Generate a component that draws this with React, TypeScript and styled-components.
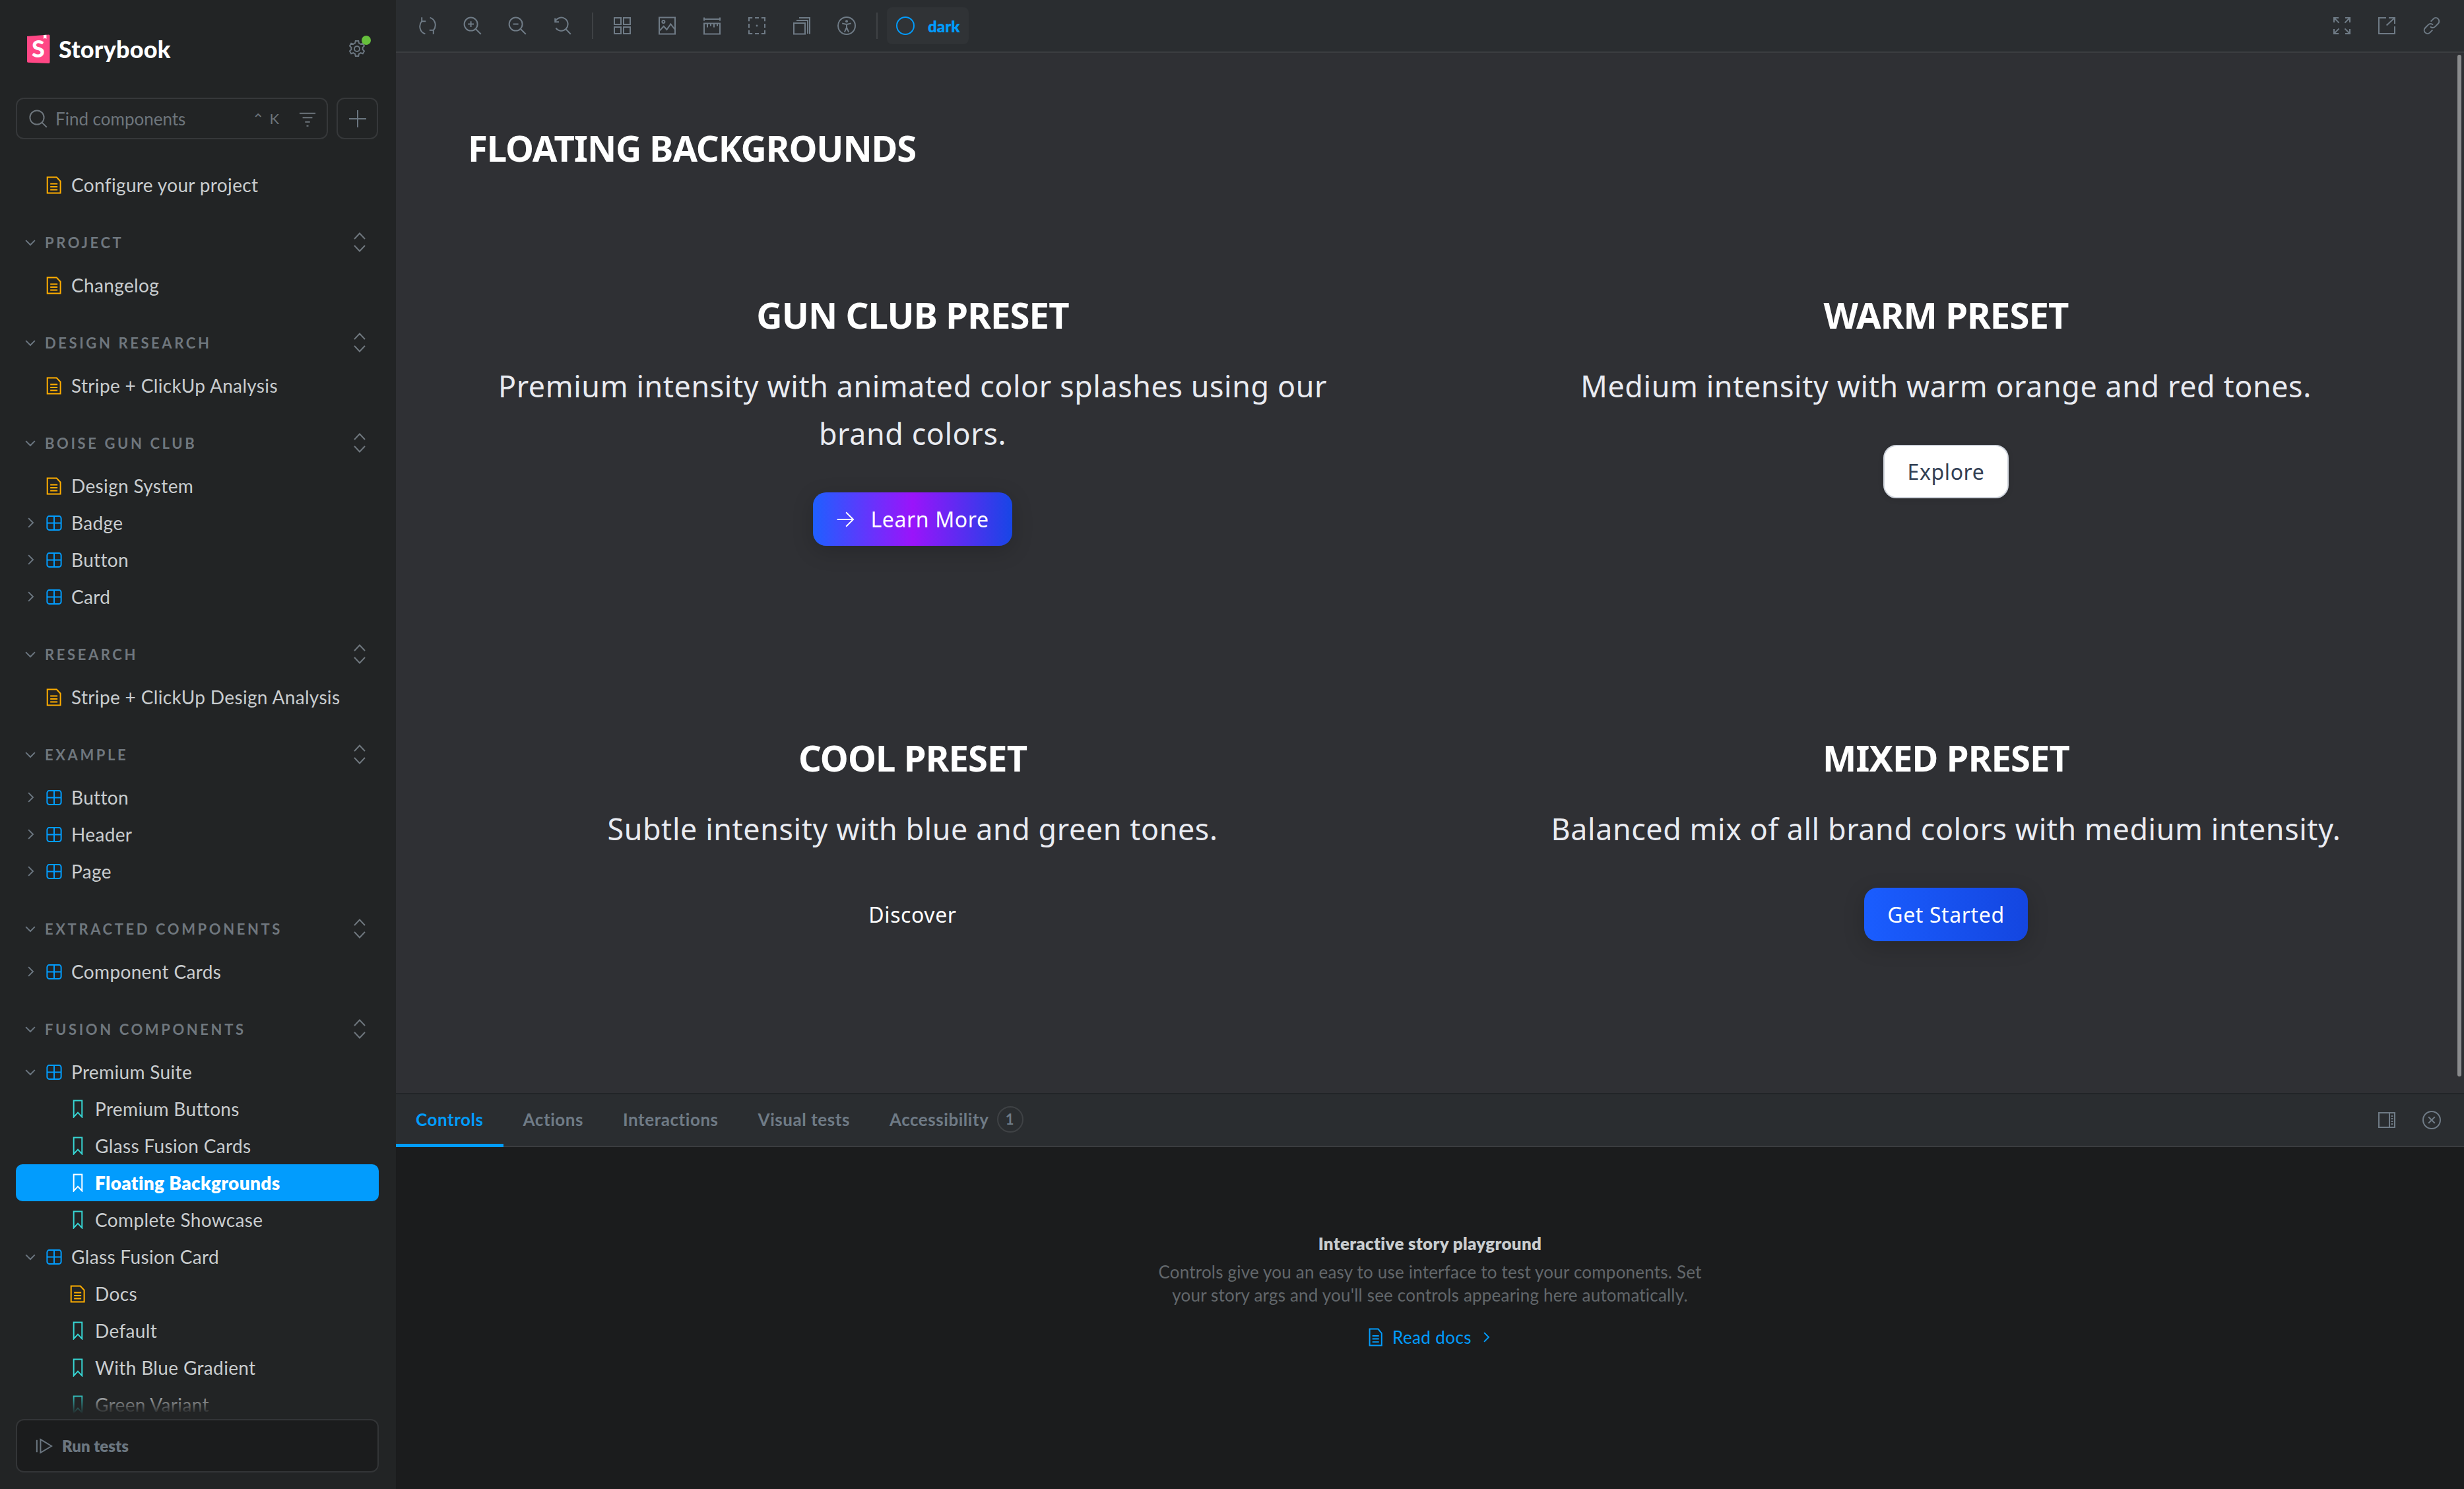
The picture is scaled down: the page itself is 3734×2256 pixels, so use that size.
import styled, { createGlobalStyle } from "styled-components";
import type { ReactNode } from "react";

const GlobalStyle = createGlobalStyle`
  html, body {
    margin: 0;
    padding: 0;
    background: #222425;
    overflow: hidden;
  }
  * {
    box-sizing: border-box;
  }
`;

const UI_FONT = `"Lato", "Noto Sans", sans-serif`;
const PREVIEW_FONT = `"Noto Sans", "Open Sans", sans-serif`;

const Shell = styled.div`
  display: flex;
  width: 3734px;
  height: 2256px;
  font-family: ${UI_FONT};
  overflow: hidden;
`;

const Sidebar = styled.aside`
  display: flex;
  flex-direction: column;
  flex: 0 0 600px;
  height: 100%;
  background: #222425;
`;

const Brand = styled.div`
  display: flex;
  align-items: center;
  justify-content: space-between;
  height: 52px;
  margin: 48px 45px 0 40px;
`;

const BrandName = styled.div`
  display: flex;
  align-items: center;
  gap: 13px;
  color: #ffffff;
  font-size: 36px;
  font-weight: 900;
  letter-spacing: 0.2px;
`;

const Gear = styled.div`
  position: relative;
  display: flex;
  color: #6b7680;
`;

const GreenDot = styled.span`
  position: absolute;
  top: -6px;
  right: -7px;
  width: 14px;
  height: 14px;
  border-radius: 50%;
  background: #66bf3c;
`;

const SearchRow = styled.div`
  display: flex;
  gap: 13px;
  margin: 48px 27px 0 24px;
`;

const SearchBox = styled.div`
  display: flex;
  align-items: center;
  flex: 1;
  height: 63px;
  padding: 0 16px 0 18px;
  border: 2px solid #36383a;
  border-radius: 12px;
  color: #6d757c;
  font-size: 26px;
`;

const SearchText = styled.span`
  flex: 1;
  margin-left: 12px;
  white-space: nowrap;
`;

const Shortcut = styled.span`
  margin-right: 22px;
  font-size: 22px;
  letter-spacing: 8px;
`;

const AddButton = styled.div`
  display: flex;
  align-items: center;
  justify-content: center;
  flex: 0 0 63px;
  height: 63px;
  border: 2px solid #36383a;
  border-radius: 12px;
  color: #6b7680;
`;

const TreeArea = styled.div`
  flex: 1;
  min-height: 0;
  margin-top: 41px;
  padding: 0 26px 0 24px;
  overflow: hidden;
`;

const Group = styled.div`
  margin-bottom: 22px;
`;

const GroupHeader = styled.div`
  display: flex;
  align-items: center;
  height: 74px;
  padding: 0 19px 0 14px;
  color: #6f777e;
`;

const CaretSlot = styled.span`
  display: flex;
  align-items: center;
  flex: 0 0 30px;
  color: #6b7680;
`;

const GroupLabel = styled.span`
  flex: 1;
  font-size: 22px;
  font-weight: 700;
  letter-spacing: 3.6px;
  text-transform: uppercase;
  white-space: nowrap;
`;

const Row = styled.div<{ $depth: number; $selected?: boolean }>`
  display: flex;
  align-items: center;
  height: 56px;
  padding-left: ${(p) => (p.$depth === 2 ? 80 : 14)}px;
  border-radius: 10px;
  background: ${(p) => (p.$selected ? "#029cfd" : "transparent")};
  color: ${(p) => (p.$selected ? "#ffffff" : "#c9cdcf")};
  font-size: 28px;
  font-weight: ${(p) => (p.$selected ? 800 : 400)};
  letter-spacing: 0.35px;
  white-space: nowrap;
`;

const RowIcon = styled.span<{ $color: string }>`
  display: flex;
  justify-content: center;
  flex: 0 0 28px;
  margin-right: 12px;
  color: ${(p) => p.$color};
`;

const SidebarFooter = styled.div`
  position: relative;
  flex: 0 0 auto;
  padding: 8px 26px 25px 24px;

  &::before {
    content: "";
    position: absolute;
    left: 0;
    right: 0;
    top: -32px;
    height: 32px;
    background: linear-gradient(to bottom, rgba(34, 36, 37, 0), #222425);
  }
`;

const RunTests = styled.div`
  display: flex;
  align-items: center;
  gap: 14px;
  height: 81px;
  padding-left: 28px;
  border: 2px solid #333537;
  border-radius: 12px;
  background: #1b1c1d;
  color: #6b7680;
  font-size: 24px;
  font-weight: 800;
`;

const MainColumn = styled.main`
  display: flex;
  flex-direction: column;
  flex: 1;
  min-width: 0;
`;

const Toolbar = styled.div`
  display: flex;
  align-items: center;
  flex: 0 0 80px;
  padding: 0 19px 0 18px;
  border-bottom: 2px solid #3b3d40;
  background: #2a2d30;
  color: #6f7b86;
`;

const ToolGroup = styled.div`
  display: flex;
  align-items: center;
  gap: 8px;
`;

const ToolButton = styled.span`
  display: flex;
  align-items: center;
  justify-content: center;
  width: 60px;
  height: 56px;
`;

const ToolDivider = styled.span`
  width: 2px;
  height: 40px;
  margin: 0 14px 0 15px;
  background: #3f4245;
`;

const ThemePill = styled.div`
  display: flex;
  align-items: center;
  gap: 20px;
  height: 56px;
  padding: 0 13px 0 14px;
  border-radius: 8px;
  background: #303336;
  color: #029cfd;
  font-size: 24px;
  font-weight: 800;
`;

const Spacer = styled.div`
  flex: 1;
`;

const Preview = styled.section`
  position: relative;
  flex: 1;
  min-height: 0;
  padding: 111px 111px 0 109px;
  background: #2f3034;
  color: #ffffff;
  font-family: ${PREVIEW_FONT};
`;

const Scrollbar = styled.div`
  position: absolute;
  top: 3px;
  right: 4px;
  bottom: 25px;
  width: 6px;
  border-radius: 3px;
  background: #8a8b8d;
`;

const PageTitle = styled.h1`
  margin: 0 0 190px;
  font-size: 54.4px;
  line-height: 67px;
  font-weight: 700;
  letter-spacing: -1.1px;
`;

const PresetGrid = styled.div`
  display: grid;
  grid-template-columns: 1348px 1348px;
  column-gap: 218px;
  row-gap: 292px;
  align-items: start;
`;

const Preset = styled.div`
  display: flex;
  flex-direction: column;
  align-items: center;
  text-align: center;
`;

const PresetTitle = styled.h2`
  margin: 0 0 43px;
  font-size: 54.4px;
  line-height: 58px;
  font-weight: 700;
  letter-spacing: -0.9px;
`;

const PresetText = styled.p`
  max-width: 1300px;
  margin: 0 0 53px;
  color: #e9ebf1;
  font-size: 44.8px;
  line-height: 72px;
  font-weight: 400;
  letter-spacing: 0.6px;
`;

const variants = {
  gradient: `
    background: linear-gradient(90deg, #1f5fff 0%, #9a14fa 50%, #1746e6 100%);
    color: #fff;
    box-shadow: 0 8px 32px rgba(0, 0, 0, 0.18);
  `,
  white: `
    background: #fff;
    color: #334155;
    border: 2px solid #d0d5dd;
    box-shadow: 0 2px 8px rgba(0, 0, 0, 0.1);
  `,
  ghost: `
    background: transparent;
    color: #fff;
  `,
  blue: `
    background: linear-gradient(90deg, #1a5dff 0%, #1446e0 100%);
    color: #fff;
    box-shadow: 0 8px 32px rgba(0, 0, 0, 0.18);
  `,
};

const PresetButton = styled.div<{ $variant: keyof typeof variants }>`
  display: flex;
  align-items: center;
  gap: 24px;
  height: 81px;
  padding: 0 35px;
  border-radius: 20px;
  font-size: 32px;
  letter-spacing: 0.6px;
  white-space: nowrap;
  ${(p) => variants[p.$variant]}
`;

const Panel = styled.section`
  display: flex;
  flex-direction: column;
  flex: 0 0 600px;
  background: #1b1c1d;
`;

const PanelBar = styled.div`
  display: flex;
  align-items: stretch;
  flex: 0 0 82px;
  padding-right: 19px;
  border-top: 2px solid #212427;
  border-bottom: 2px solid #3b3d40;
  background: #2a2d30;
`;

const Tab = styled.div<{ $active?: boolean }>`
  display: flex;
  align-items: center;
  gap: 12px;
  height: 80px;
  margin-bottom: -2px;
  padding: 0 30px;
  border-bottom: 5px solid ${(p) => (p.$active ? "#029cfd" : "transparent")};
  color: ${(p) => (p.$active ? "#029cfd" : "#6f7b86")};
  font-size: 26px;
  font-weight: 700;
  letter-spacing: 0.55px;
  white-space: nowrap;
`;

const TabBadge = styled.span`
  display: flex;
  align-items: center;
  justify-content: center;
  width: 40px;
  height: 40px;
  border: 2px solid #3f4245;
  border-radius: 50%;
  font-size: 22px;
`;

const PanelActions = styled.div`
  display: flex;
  align-items: center;
  gap: 8px;
  margin-left: auto;
  color: #6f7b86;
`;

const EmptyState = styled.div`
  display: flex;
  flex-direction: column;
  align-items: center;
  flex: 1;
  padding-top: 128px;
  text-align: center;
`;

const EmptyTitle = styled.div`
  color: #c9cdcf;
  font-size: 26px;
  line-height: 36px;
  font-weight: 800;
  letter-spacing: 0.3px;
`;

const EmptyText = styled.div`
  width: 840px;
  margin-top: 8px;
  color: #62676b;
  font-size: 26px;
  line-height: 35px;
  letter-spacing: 0.2px;
`;

const DocsLink = styled.div`
  display: flex;
  align-items: center;
  gap: 14px;
  margin-top: 28px;
  color: #029cfd;
  font-size: 26px;
  line-height: 36px;
  letter-spacing: 0.4px;
`;

const Glyph = styled.svg`
  display: block;
  flex: none;
  fill: none;
  stroke: currentColor;
  stroke-width: 2px;

  & * {
    vector-effect: non-scaling-stroke;
  }
`;

const ICONS: Record<string, ReactNode> = {
  sync: <path d="M2.6.6v3h3M2.6 3.6A6 6 0 0 0 5.2 13.2M11.4 13.4v-3h-3M11.4 10.4A6 6 0 0 0 8.8.8" />,
  zoomIn: <><circle cx="5.8" cy="5.8" r="5" /><path d="M9.5 9.5 13.4 13.4M5.8 3.6v4.4M3.6 5.8H8" /></>,
  zoomOut: <><circle cx="5.8" cy="5.8" r="5" /><path d="M9.5 9.5 13.4 13.4M3.8 5.8h4" /></>,
  zoomReset: <path d="M1.6 1.2v2.9h2.9M1.6 4.1a5 5 0 1 1 .6 4.6M9.7 9.5l3.7 3.9" />,
  grid: <path d="M1 1h5v5H1zM8 1h5v5H8zM1 8h5v5H1zM8 8h5v5H8z" />,
  photo: <><path d="M1 .8h12v12.4H1z" /><circle cx="4.2" cy="4" r="1" /><path d="M1 11l3.4-3.6 2.3 2.5 3-4.2 3.3 4.3" /></>,
  ruler: <path d="M1 .8v2.4M13 .8v2.4M1 2h12M1 5.3h12v7.9H1zM3.5 5.3v3M6 5.3v2M8.5 5.3v3M11 5.3v2" />,
  outline: <><path d="M1 3.6V1h2.6M5.5 1h3M10.4 1H13v2.6M13 5.5v3M13 10.4V13h-2.6M8.5 13h-3M3.6 13H1v-2.6M1 8.5v-3" /><circle cx="7" cy="7" r=".7" fill="currentColor" stroke="none" /></>,
  layers: <path d="M1 5h8.5v8.2H1zM3 3h8.5v10M5 1h8v12.2" />,
  a11y: <><circle cx="7" cy="7" r="6.5" /><circle cx="7" cy="3.6" r="1" fill="currentColor" stroke="none" /><path d="M3.6 5.2 7 6l3.4-.8M7 6v2.4M7 8.4l-1.6 3.4M7 8.4l1.6 3.4" /></>,
  circle: <circle cx="7" cy="7" r="6.5" />,
  expand: <path d="M1 4.5V1h3.5M1 1l3.8 3.8M13 4.5V1H9.5M13 1 9.2 4.8M1 9.5V13h3.5M1 13l3.8-3.8M13 9.5V13H9.5M13 13 9.2 9.2" />,
  share: <path d="M6.5 1H1v12h12V7.5M8.5 1H13v4.5M13 1 6.8 6.7" />,
  link: <path d="M6.3 3.8 8.3 1.8a2.5 2.5 0 0 1 3.6 3.6L9.6 7.7a2.5 2.5 0 0 1-3.6 0M7.7 10.2l-2 2a2.5 2.5 0 0 1-3.6-3.6l2.3-2.3a2.5 2.5 0 0 1 3.6 0" />,
  sideAlt: <path d="M1 1.5h12v11H1zM9 1.5v11M10.3 4h1.4M10.3 6h1.4M10.3 8h1.4M10.3 10h1.4" />,
  closeCircle: <><circle cx="7" cy="7" r="6.5" /><path d="M4.6 4.6l4.8 4.8M9.4 4.6l-4.8 4.8" /></>,
  search: <><circle cx="6" cy="6" r="5.3" /><path d="M9.8 9.8l3.6 3.6" /></>,
  filter: <path d="M.5 2.5h13M3 6h8M5 9.5h4M6.2 12.8h1.6" />,
  plus: <path d="M7 .5v13M.5 7h13" />,
  gear: <><circle cx="7" cy="7" r="2" /><path d="M5.9 1h2.2l.4 1.7 1.3.7 1.6-.5 1.1 1.9-1.2 1.2v1.5l1.2 1.2-1.1 1.9-1.6-.5-1.3.7-.4 1.7H5.9l-.4-1.7-1.3-.7-1.6.5-1.1-1.9 1.2-1.2V6L1.5 4.8l1.1-1.9 1.6.5 1.3-.7z" /></>,
  caretDown: <path d="M1 4.5 7 10.5 13 4.5" />,
  caretRight: <path d="M4.5 1 10.5 7 4.5 13" />,
  document: <path d="M1 .8h8.2L12.6 4v9.2H1zM3.6 6h6.4M3.6 8.3h6.4M3.6 10.6h6.4" />,
  component: <><rect x=".8" y="1.6" width="12.4" height="10.8" rx="1.8" /><path d="M7 1.6v10.8M.8 7h12.4" /></>,
  bookmark: <path d="M1.5.8h11v12.4L7 9.8l-5.5 3.4z" />,
  play: <path d="M1 2v10M4 1.6 13 7l-9 5.4z" />,
  arrow: <path d="M.8 7h12M7.6 1.6 13 7l-5.4 5.4" />,
};

type IconProps = { name: string; size?: number; width?: number; height?: number };

const Icon = ({ name, size = 28, width, height }: IconProps) => (
  <Glyph width={width ?? size} height={height ?? size} viewBox="0 0 14 14" preserveAspectRatio="none">
    {ICONS[name]}
  </Glyph>
);

const Logo = () => (
  <svg width="36" height="44" viewBox="0 0 36 44">
    <path d="M1 3 34 0.5 Q35.5 0.5 35.5 2 V42 Q35.5 44 34 44 L2.5 42.7 Q1 42.6 1 41Z" fill="#ff4785" />
    <path d="M26 1 V7 L28.2 5.4 30.4 7 V.7Z" fill="#ffffff" />
    <text x="18" y="35" textAnchor="middle" fill="#ffffff" fontFamily="Lato, sans-serif" fontWeight="900" fontSize="36">
      S
    </text>
  </svg>
);

const ExpandToggle = () => (
  <svg width="20" height="30" viewBox="0 0 20 30" fill="none" stroke="currentColor" strokeWidth="2">
    <path d="M2 10 10 1.5 18 10M2 20 10 28.5 18 20" />
  </svg>
);

type TreeItem = {
  label: string;
  kind: "document" | "component" | "bookmark";
  depth?: number;
  caret?: "down" | "right";
  selected?: boolean;
};

const ICON_COLORS = { document: "#ffae00", component: "#029cfd", bookmark: "#37d5d3" };

const groups: { title: string; items: TreeItem[] }[] = [
  { title: "Project", items: [{ label: "Changelog", kind: "document" }] },
  { title: "Design Research", items: [{ label: "Stripe + ClickUp Analysis", kind: "document" }] },
  {
    title: "Boise Gun Club",
    items: [
      { label: "Design System", kind: "document" },
      { label: "Badge", kind: "component", caret: "right" },
      { label: "Button", kind: "component", caret: "right" },
      { label: "Card", kind: "component", caret: "right" },
    ],
  },
  { title: "Research", items: [{ label: "Stripe + ClickUp Design Analysis", kind: "document" }] },
  {
    title: "Example",
    items: [
      { label: "Button", kind: "component", caret: "right" },
      { label: "Header", kind: "component", caret: "right" },
      { label: "Page", kind: "component", caret: "right" },
    ],
  },
  { title: "Extracted Components", items: [{ label: "Component Cards", kind: "component", caret: "right" }] },
  {
    title: "Fusion Components",
    items: [
      { label: "Premium Suite", kind: "component", caret: "down" },
      { label: "Premium Buttons", kind: "bookmark", depth: 2 },
      { label: "Glass Fusion Cards", kind: "bookmark", depth: 2 },
      { label: "Floating Backgrounds", kind: "bookmark", depth: 2, selected: true },
      { label: "Complete Showcase", kind: "bookmark", depth: 2 },
      { label: "Glass Fusion Card", kind: "component", caret: "down" },
      { label: "Docs", kind: "document", depth: 2 },
      { label: "Default", kind: "bookmark", depth: 2 },
      { label: "With Blue Gradient", kind: "bookmark", depth: 2 },
      { label: "Green Variant", kind: "bookmark", depth: 2 },
    ],
  },
];

const TreeRow = ({ item }: { item: TreeItem }) => {
  const depth = item.depth ?? 1;
  return (
    <Row $depth={depth} $selected={item.selected}>
      {depth === 1 && (
        <CaretSlot>
          {item.caret && <Icon name={item.caret === "down" ? "caretDown" : "caretRight"} size={16} />}
        </CaretSlot>
      )}
      <RowIcon $color={item.selected ? "#ffffff" : ICON_COLORS[item.kind]}>
        {item.kind === "bookmark" ? <Icon name="bookmark" width={16} height={28} /> : <Icon name={item.kind} width={24} height={27} />}
      </RowIcon>
      {item.label}
    </Row>
  );
};

const zoomTools = ["sync", "zoomIn", "zoomOut", "zoomReset"];
const viewTools = ["grid", "photo", "ruler", "outline", "layers", "a11y"];
const tabs = ["Actions", "Interactions", "Visual tests"];

export default function App() {
  return (
    <Shell>
      <GlobalStyle />
      <Sidebar>
        <Brand>
          <BrandName>
            <Logo />
            Storybook
          </BrandName>
          <Gear>
            <Icon name="gear" />
            <GreenDot />
          </Gear>
        </Brand>
        <SearchRow>
          <SearchBox>
            <Icon name="search" />
            <SearchText>Find components</SearchText>
            <Shortcut>⌃K</Shortcut>
            <Icon name="filter" size={26} />
          </SearchBox>
          <AddButton>
            <Icon name="plus" />
          </AddButton>
        </SearchRow>
        <TreeArea>
          <Group>
            <TreeRow item={{ label: "Configure your project", kind: "document" }} />
          </Group>
          {groups.map((group) => (
            <Group key={group.title}>
              <GroupHeader>
                <CaretSlot>
                  <Icon name="caretDown" size={16} />
                </CaretSlot>
                <GroupLabel>{group.title}</GroupLabel>
                <ExpandToggle />
              </GroupHeader>
              {group.items.map((item) => (
                <TreeRow key={item.label} item={item} />
              ))}
            </Group>
          ))}
        </TreeArea>
        <SidebarFooter>
          <RunTests>
            <Icon name="play" size={26} />
            Run tests
          </RunTests>
        </SidebarFooter>
      </Sidebar>

      <MainColumn>
        <Toolbar>
          <ToolGroup>
            {zoomTools.map((name) => (
              <ToolButton key={name}>
                <Icon name={name} />
              </ToolButton>
            ))}
          </ToolGroup>
          <ToolDivider />
          <ToolGroup>
            {viewTools.map((name) => (
              <ToolButton key={name}>
                <Icon name={name} />
              </ToolButton>
            ))}
          </ToolGroup>
          <ToolDivider />
          <ThemePill>
            <Icon name="circle" />
            dark
          </ThemePill>
          <Spacer />
          <ToolGroup>
            {["expand", "share", "link"].map((name) => (
              <ToolButton key={name}>
                <Icon name={name} />
              </ToolButton>
            ))}
          </ToolGroup>
        </Toolbar>

        <Preview>
          <Scrollbar />
          <PageTitle>FLOATING BACKGROUNDS</PageTitle>
          <PresetGrid>
            <Preset>
              <PresetTitle>GUN CLUB PRESET</PresetTitle>
              <PresetText>Premium intensity with animated color splashes using our brand colors.</PresetText>
              <PresetButton $variant="gradient">
                <Icon name="arrow" />
                Learn More
              </PresetButton>
            </Preset>
            <Preset>
              <PresetTitle>WARM PRESET</PresetTitle>
              <PresetText>Medium intensity with warm orange and red tones.</PresetText>
              <PresetButton $variant="white">Explore</PresetButton>
            </Preset>
            <Preset>
              <PresetTitle>COOL PRESET</PresetTitle>
              <PresetText>Subtle intensity with blue and green tones.</PresetText>
              <PresetButton $variant="ghost">Discover</PresetButton>
            </Preset>
            <Preset>
              <PresetTitle>MIXED PRESET</PresetTitle>
              <PresetText>Balanced mix of all brand colors with medium intensity.</PresetText>
              <PresetButton $variant="blue">Get Started</PresetButton>
            </Preset>
          </PresetGrid>
        </Preview>

        <Panel>
          <PanelBar>
            <Tab $active>Controls</Tab>
            {tabs.map((tab) => (
              <Tab key={tab}>{tab}</Tab>
            ))}
            <Tab>
              Accessibility
              <TabBadge>1</TabBadge>
            </Tab>
            <PanelActions>
              <ToolButton>
                <Icon name="sideAlt" />
              </ToolButton>
              <ToolButton>
                <Icon name="closeCircle" />
              </ToolButton>
            </PanelActions>
          </PanelBar>
          <EmptyState>
            <EmptyTitle>Interactive story playground</EmptyTitle>
            <EmptyText>
              Controls give you an easy to use interface to test your components. Set your story args and you'll see
              controls appearing here automatically.
            </EmptyText>
            <DocsLink>
              <Icon name="document" width={22} height={28} />
              Read docs
              <Icon name="caretRight" size={16} />
            </DocsLink>
          </EmptyState>
        </Panel>
      </MainColumn>
    </Shell>
  );
}
